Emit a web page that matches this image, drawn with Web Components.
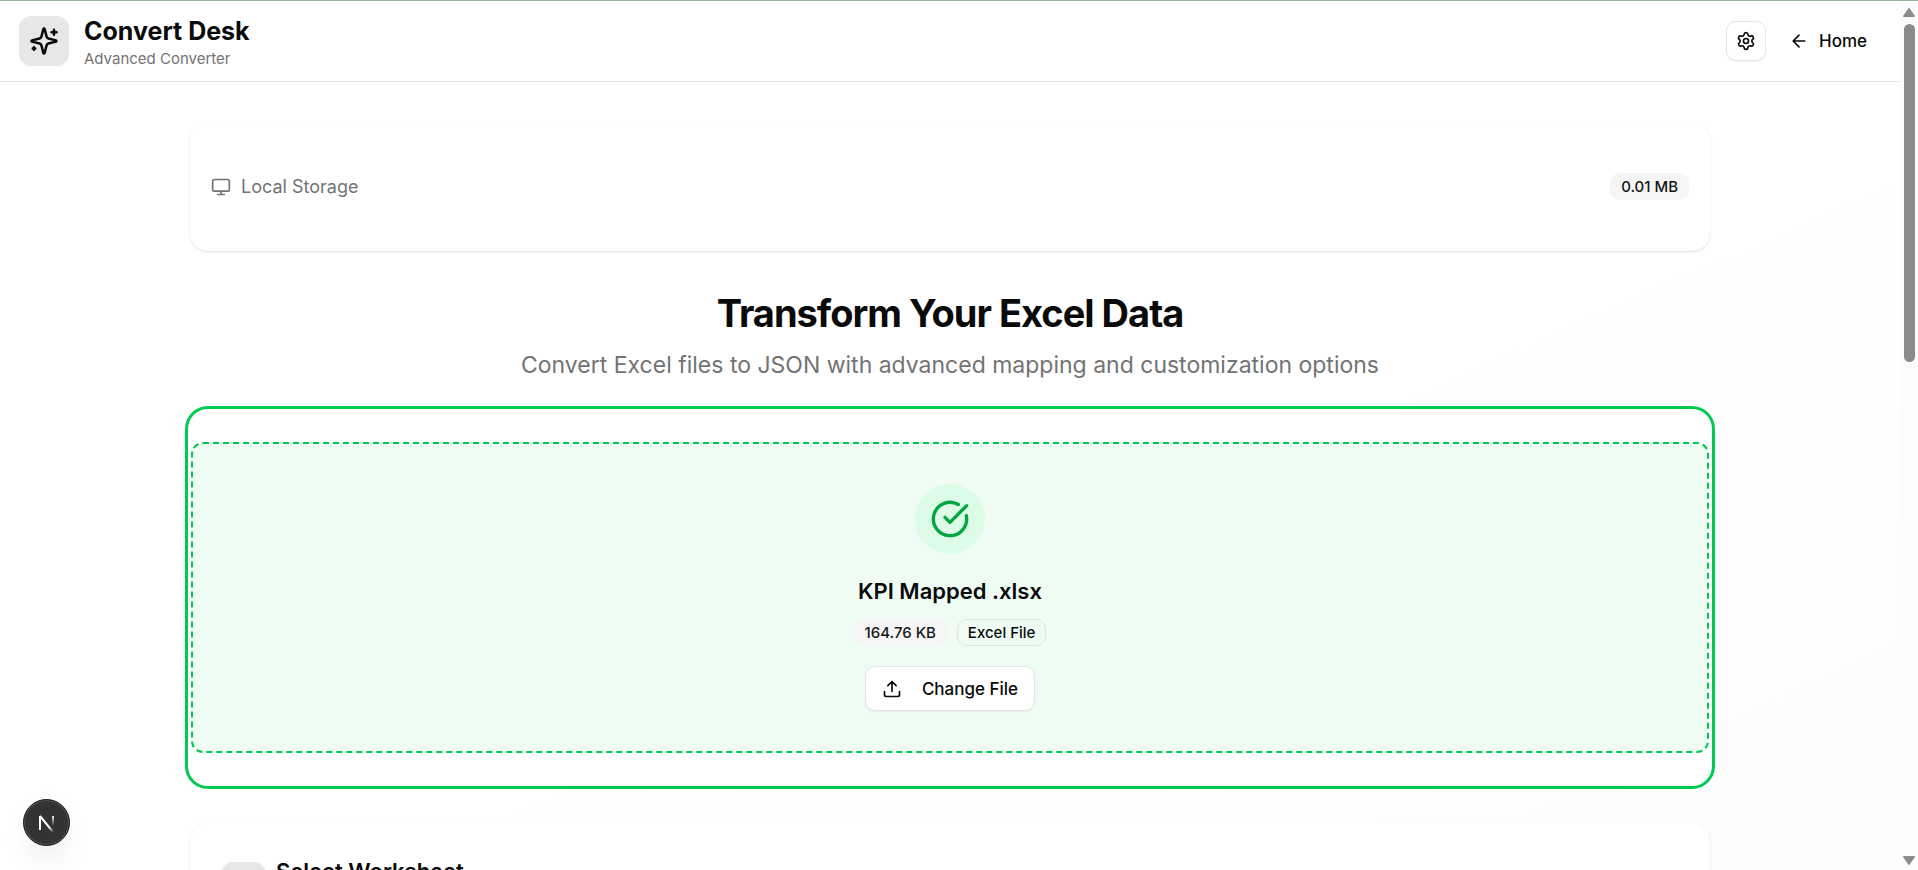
<!DOCTYPE html>
<html lang="en">
<head>
<meta charset="utf-8">
<title>Convert Desk</title>
<style>
  body { margin: 0; font-family: Inter, "Liberation Sans", sans-serif; color: #0a0a0a; }
</style>
</head>
<body>
<desk-app></desk-app>
<script>
const icons = {
  sparkles: '<path d="M9.937 15.5A2 2 0 0 0 8.5 14.063l-6.135-1.582a.5.5 0 0 1 0-.962L8.5 9.936A2 2 0 0 0 9.937 8.5l1.582-6.135a.5.5 0 0 1 .963 0L14.063 8.5A2 2 0 0 0 15.5 9.937l6.135 1.581a.5.5 0 0 1 0 .964L15.5 14.063a2 2 0 0 0-1.437 1.437l-1.582 6.135a.5.5 0 0 1-.963 0z"/><path d="M20 3v4M22 5h-4M4 17v2M5 18H3"/>',
  settings: '<path d="M9.671 4.136a2.34 2.34 0 0 1 4.659 0 2.34 2.34 0 0 0 3.319 1.915 2.34 2.34 0 0 1 2.33 4.033 2.34 2.34 0 0 0 0 3.831 2.34 2.34 0 0 1-2.33 4.033 2.34 2.34 0 0 0-3.319 1.915 2.34 2.34 0 0 1-4.659 0 2.34 2.34 0 0 0-3.32-1.915 2.34 2.34 0 0 1-2.33-4.033 2.34 2.34 0 0 0 0-3.831A2.34 2.34 0 0 1 6.35 6.051a2.34 2.34 0 0 0 3.319-1.915"/><circle cx="12" cy="12" r="3"/>',
  back: '<path d="m12 19-7-7 7-7M19 12H5"/>',
  monitor: '<rect width="20" height="14" x="2" y="3" rx="2"/><path d="M8 21h8M12 17v4"/>',
  check: '<path d="M21.801 10A10 10 0 1 1 17 3.335"/><path d="m9 11 3 3L22 4"/>',
  upload: '<path d="M12 3v12M17 8l-5-5-5 5M21 15v4a2 2 0 0 1-2 2H5a2 2 0 0 1-2-2v-4"/>',
  sheet: '<rect width="18" height="18" x="3" y="3" rx="2"/><path d="M3 9h18M3 15h18M12 3v18"/>'
};

function define(name, markup) {
  const template = document.createElement('template');
  template.innerHTML = markup;
  customElements.define(name, class extends HTMLElement {
    constructor() {
      super();
      this.attachShadow({ mode: 'open' }).append(template.content.cloneNode(true));
    }
  });
}

customElements.define('desk-icon', class extends HTMLElement {
  connectedCallback() {
    if (this.shadowRoot) return;
    this.attachShadow({ mode: 'open' }).innerHTML = `
      <style>
        :host { display: block; flex: none; width: var(--icon-size, 20px); height: var(--icon-size, 20px); }
        svg { display: block; width: 100%; height: 100%; }
      </style>
      <svg viewBox="0 0 24 24" fill="none" stroke="currentColor" stroke-width="2" stroke-linecap="round" stroke-linejoin="round" aria-hidden="true">${icons[this.getAttribute('name')]}</svg>`;
  }
});

define('desk-tile', `
  <style>
    :host { display: grid; place-items: center; flex: none; width: var(--tile-size, 50px); height: var(--tile-size, 50px); border-radius: 12px; background: #e7e7e7; }
  </style>
  <slot></slot>`);

define('desk-badge', `
  <style>
    :host { display: inline-flex; align-items: center; box-sizing: border-box; height: 27px; padding: 0 10px; border: 1px solid transparent; border-radius: 10px; background: #f5f5f5; color: #171717; font-size: 15px; line-height: 20px; font-weight: 500; white-space: nowrap; }
    :host([outline]) { background: none; border-color: #e0e4e1; color: #0a0a0a; }
  </style>
  <slot></slot>`);

define('desk-card', `
  <style>
    :host { display: block; box-sizing: border-box; border: 1px solid transparent; border-radius: 18px; background: #fff; box-shadow: 0 1px 3px rgba(0,0,0,.1), 0 1px 2px -1px rgba(0,0,0,.1); }
    :host([selected]) { outline: 3px solid #00c951; outline-offset: 2px; box-shadow: none; }
  </style>
  <slot></slot>`);

define('desk-header', `
  <style>
    :host { display: flex; align-items: flex-start; justify-content: space-between; padding: 15px 20px 10px 19px; border-top: 1px solid #9db59d; border-bottom: 1px solid #e5e5e5; background: #fff; }
    .brand { display: flex; align-items: flex-start; gap: 15px; }
    .brand desk-icon { --icon-size: 30px; }
    h1 { margin: 0; font-size: 25px; line-height: 30px; font-weight: 700; }
    p { margin: 0; font-size: 15px; line-height: 25px; color: #737373; }
    nav { display: flex; align-items: center; gap: 10px; height: 50px; }
    button { display: grid; place-items: center; width: 40px; height: 40px; padding: 0; border: 1px solid #e5e5e5; border-radius: 10px; background: #fff; color: inherit; box-shadow: 0 1px 2px rgba(0,0,0,.05); }
    a { display: flex; align-items: center; gap: 10px; height: 40px; padding: 0 13px; color: inherit; text-decoration: none; font-size: 17px; line-height: 24px; font-weight: 500; }
  </style>
  <div class="brand">
    <desk-tile><desk-icon name="sparkles"></desk-icon></desk-tile>
    <div><h1>Convert Desk</h1><p>Advanced Converter</p></div>
  </div>
  <nav>
    <button type="button" aria-label="Settings"><desk-icon name="settings"></desk-icon></button>
    <a href="#"><desk-icon name="back"></desk-icon>Home</a>
  </nav>`);

define('desk-storage', `
  <style>
    :host { display: block; }
    .row { display: flex; align-items: center; justify-content: space-between; padding: 50px 20px; }
    .label { display: flex; align-items: center; gap: 10px; color: #737373; font-size: 18px; line-height: 24px; }
  </style>
  <desk-card>
    <div class="row">
      <span class="label"><desk-icon name="monitor"></desk-icon>Local Storage</span>
      <desk-badge>0.01 MB</desk-badge>
    </div>
  </desk-card>`);

define('desk-intro', `
  <style>
    :host { display: block; text-align: center; }
    h2 { margin: 0; font-size: 38px; line-height: 44px; font-weight: 700; letter-spacing: -1px; }
    p { margin: 12px 0 0; font-size: 23px; line-height: 36px; color: #737373; }
  </style>
  <h2>Transform Your Excel Data</h2>
  <p>Convert Excel files to JSON with advanced mapping and customization options</p>`);

define('desk-dropzone', `
  <style>
    :host { display: block; }
    .area { display: flex; flex-direction: column; align-items: center; margin: 30px 0; padding: 40px; border: 2px dashed #00c951; border-radius: 12px; background: #effcf4; }
    .status { display: grid; place-items: center; width: 70px; height: 70px; border-radius: 50%; background: #dcfce7; color: #00a63e; --icon-size: 40px; }
    h3 { margin: 20px 0 10px; font-size: 22px; line-height: 35px; font-weight: 600; }
    .meta { display: flex; gap: 10px; }
    button { display: flex; align-items: center; gap: 20px; height: 45px; margin-top: 20px; padding: 0 16px; border: 1px solid #e5e5e5; border-radius: 10px; background: #fff; color: inherit; font: 500 17px/24px Inter, sans-serif; box-shadow: 0 1px 2px rgba(0,0,0,.05); }
  </style>
  <desk-card selected>
    <div class="area">
      <div class="status"><desk-icon name="check"></desk-icon></div>
      <h3>KPI Mapped .xlsx</h3>
      <div class="meta"><desk-badge>164.76 KB</desk-badge><desk-badge outline>Excel File</desk-badge></div>
      <button type="button"><desk-icon name="upload"></desk-icon>Change File</button>
    </div>
  </desk-card>`);

define('desk-worksheet', `
  <style>
    :host { display: block; }
    header { display: flex; align-items: flex-start; gap: 10px; padding: 38px 30px; }
    desk-tile { --tile-size: 45px; }
    h3 { margin: 0; font-size: 22px; line-height: 18px; font-weight: 600; }
  </style>
  <desk-card>
    <header>
      <desk-tile><desk-icon name="sheet"></desk-icon></desk-tile>
      <h3>Select Worksheet</h3>
    </header>
  </desk-card>`);

define('desk-scrollbar', `
  <style>
    :host { display: flex; flex-direction: column; align-items: center; box-sizing: border-box; padding: 7px 0 5px; border-top: 1px solid #9db59d; background: #fcfcfc; }
    svg { display: block; flex: none; width: 12px; height: 10px; fill: #8b8b8b; }
    .track { flex: 1; width: 11px; margin: 6px 0; }
    .thumb { height: 41%; border-radius: 6px; background: #8b8b8b; }
  </style>
  <svg viewBox="0 0 12 10"><path d="M5 1q1-2 2 0l5 7q0 1-1 1H1q-1 0-1-1z"/></svg>
  <div class="track"><div class="thumb"></div></div>
  <svg viewBox="0 0 12 10"><path d="M5 9q1 2 2 0l5-7q0-1-1-1H1q-1 0-1 1z"/></svg>`);

define('dev-launcher', `
  <style>
    :host { position: fixed; left: 23px; bottom: 24px; }
    button { display: grid; place-items: center; width: 47px; height: 47px; padding: 0; border: 1px solid #171717; border-radius: 50%; background: #333; box-shadow: inset 0 0 0 1px #555, 0 16px 32px -8px rgba(0,0,0,.12), 0 0 50px rgba(0,0,0,.02); }
    svg { display: block; width: 23px; height: 23px; }
  </style>
  <button type="button" aria-label="Open developer tools">
    <svg viewBox="0 0 23 23" fill="none" stroke-width="2">
      <defs>
        <linearGradient id="fall" gradientUnits="userSpaceOnUse" x1="12" y1="12" x2="19" y2="21"><stop offset=".4" stop-color="#fff"/><stop offset="1" stop-color="#fff" stop-opacity="0"/></linearGradient>
        <linearGradient id="rise" gradientUnits="userSpaceOnUse" x1="18" y1="4" x2="18" y2="15"><stop stop-color="#fff"/><stop offset="1" stop-color="#fff" stop-opacity="0"/></linearGradient>
      </defs>
      <path stroke="#fff" d="M5 19V5"/><path stroke="url(#fall)" d="M5 5l13 16"/><path stroke="url(#rise)" d="M18 5v10"/>
    </svg>
  </button>`);

define('desk-app', `
  <style>
    :host { display: grid; grid-template-columns: 1fr 18px; height: 100vh; overflow: hidden; }
    .page { overflow: hidden; background: linear-gradient(to bottom right, #fff 60%, #fcfcfc); }
    main { display: flex; flex-direction: column; max-width: 1520px; margin: 0 auto; padding: 40px 20px; }
    desk-intro { margin: 40px 0 28px; }
    desk-worksheet { margin-top: 39px; }
  </style>
  <div class="page">
    <desk-header></desk-header>
    <main>
      <desk-storage></desk-storage>
      <desk-intro></desk-intro>
      <desk-dropzone></desk-dropzone>
      <desk-worksheet></desk-worksheet>
    </main>
  </div>
  <desk-scrollbar></desk-scrollbar>
  <dev-launcher></dev-launcher>`);
</script>
</body>
</html>
